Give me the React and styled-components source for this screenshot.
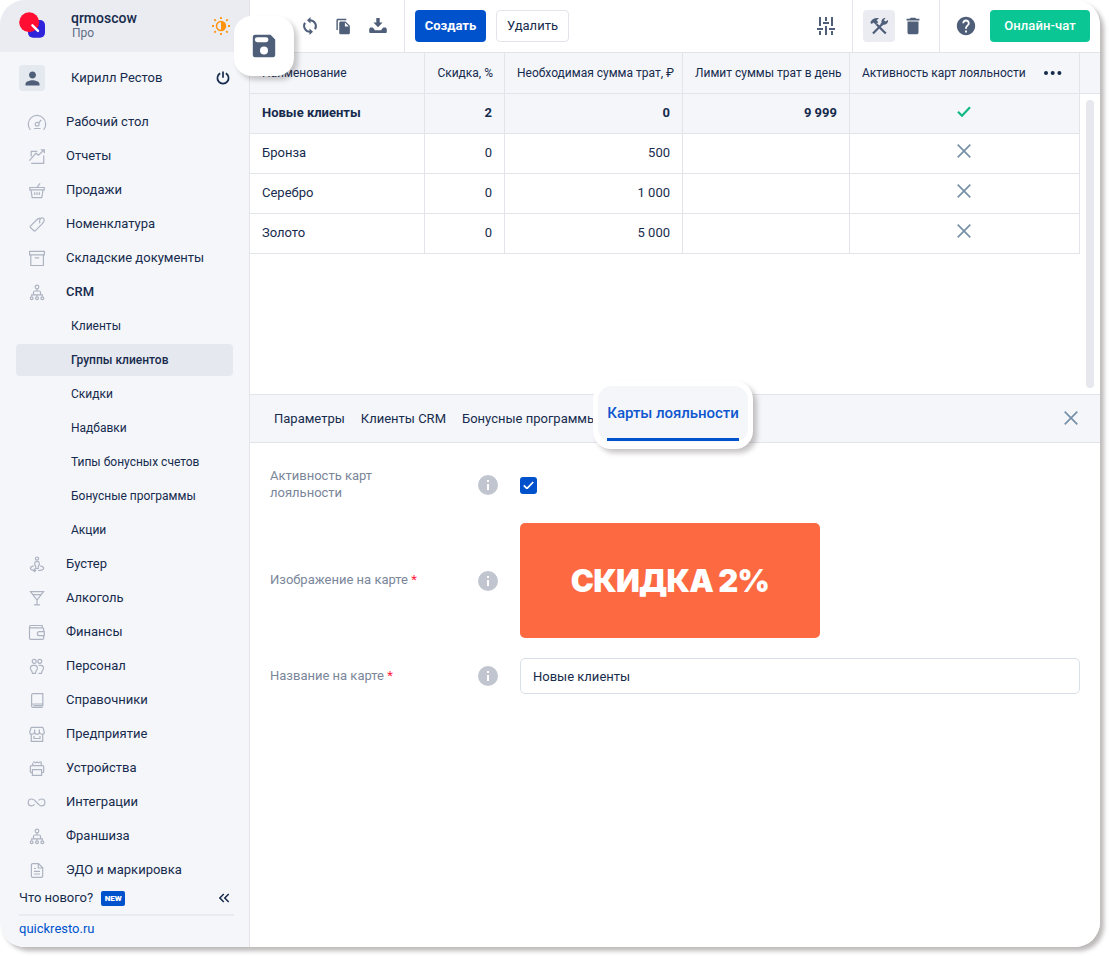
import React from "react";
import styled, { createGlobalStyle } from "styled-components";
import {
  MdDelete,
  MdFileCopy,
  MdHelp,
  MdKeyboardDoubleArrowLeft,
  MdPerson,
} from "react-icons/md";

const NAV = [
  { icon: "gauge", label: "Рабочий стол" },
  { icon: "report", label: "Отчеты" },
  { icon: "basket", label: "Продажи" },
  { icon: "tag", label: "Номенклатура" },
  { icon: "archive", label: "Складские документы" },
  {
    icon: "tree",
    label: "CRM",
    open: true,
    children: [
      "Клиенты",
      "Группы клиентов",
      "Скидки",
      "Надбавки",
      "Типы бонусных счетов",
      "Бонусные программы",
      "Акции",
    ],
  },
  { icon: "booster", label: "Бустер" },
  { icon: "glass", label: "Алкоголь" },
  { icon: "wallet", label: "Финансы" },
  { icon: "people", label: "Персонал" },
  { icon: "book", label: "Справочники" },
  { icon: "store", label: "Предприятие" },
  { icon: "printer", label: "Устройства" },
  { icon: "infinity", label: "Интеграции" },
  { icon: "tree", label: "Франшиза" },
  { icon: "doc", label: "ЭДО и маркировка" },
];

const ROWS = [
  { name: "Новые клиенты", discount: "2", need: "0", limit: "9 999", active: true },
  { name: "Бронза", discount: "0", need: "500", limit: "", active: false },
  { name: "Серебро", discount: "0", need: "1 000", limit: "", active: false },
  { name: "Золото", discount: "0", need: "5 000", limit: "", active: false },
];

const NAV_ICONS = {
  gauge: (
    <>
      <path d="M3.4 16.8A8.7 8.7 0 1 1 16.6 16.8M7 15.5h6.5M11.6 9.8l2.6-2.8" />
      <circle cx="10.2" cy="11.2" r="1.9" />
    </>
  ),
  report: (
    <path d="M2.4 13.7 9 6.2l2.4 2L17 3M13.8 2.8h3.5v3.5M4.2 9.5V4.3h6M16.7 8.500v7.800H4.200" />
  ),
  basket: (
    <path d="M13 2.3 10 6.5M2.8 6.5h14.4v2.3H2.8zM4 9l1.2 7.6h9.6L16 9M7.7 11.3v2.6M10 11.3v2.6M12.3 11.3v2.6" />
  ),
  tag: (
    <path d="M3.400 11.200 10.600 4c.5-.5 1-.6 1.600-.6h1.300M16 7.200c0 .6-.2 1-.6 1.400l-7 7.100c-.5.5-1 .5-1.500 0l-3.400-3.200c-.5-.4-.5-.9 0-1.300M12.800 8.400c-.7-3 .3-5.500 2.400-5.600 2.500-.1 2.500 3.600.5 5.200" />
  ),
  archive: <path d="M2.600 2.400h14.800v3.400H2.600zM3.800 6v10.500h12.600V6M7.800 8.800h4.400" />,
  tree: (
    <>
      <circle cx="10" cy="4" r="1.8" />
      <path d="M10 6v2M6.500 11.500V9.400c0-.8.5-1.400 1.400-1.400h4.200c.9 0 1.400.6 1.400 1.400v2.100M4.700 13.600v-1.800h10.600v1.800M10 11.800v1.800" />
      <circle cx="4.700" cy="15.300" r="1.400" />
      <circle cx="10" cy="15.300" r="1.400" />
      <circle cx="15.300" cy="15.300" r="1.400" />
    </>
  ),
  booster: (
    <>
      <circle cx="10" cy="3.600" r="1.600" />
      <path d="M8.700 13.500V11L7.800 10V8c0-.8.5-1.300 1.300-1.300h1.800c.8 0 1.300.5 1.300 1.300v2l-.9 1v2.500zM6.600 10.800c-4.800 1-4.200 4.600 2 4.700M6.800 13.800l1.900 1.700-1.900 1.400M11 15.500c6.800.1 7.400-3.800 2.200-4.700" />
    </>
  ),
  glass: <path d="M3.500 2.700h13L10 11zM5.800 5.700h8.400M10 11v4.700M7 15.800h6" />,
  wallet: (
    <path d="M16.600 8.500V6c0-.8-.4-1.200-1.200-1.200H3.700c-.8 0-1.200-.4-1.200-1.100s.4-1.200 1.200-1.200h11.500v2.200M2.500 3.800v11.400c0 .8.4 1.200 1.200 1.200h11.700c.8 0 1.200-.4 1.200-1.200v-2.400M17.300 8.700h-5c-2.600 0-2.600 4 0 4h5z" />
  ),
  people: (
    <>
      <circle cx="7.200" cy="4.300" r="2" />
      <circle cx="12.800" cy="4.300" r="2" />
      <path d="M5.500 16.400c-.3-1.500-.4-2-1-2.700-2-1.800-1.300-5.400 1.600-5.400h1.600c2.900 0 3.600 3.600 1.600 5.400-.6.700-.7 1.200-.9 2.700zM11.600 8.300h2.200c2.900 0 3.600 3.600 1.600 5.400-.6.700-.7 1.200-.9 2.700h-3" />
    </>
  ),
  book: (
    <path d="M15.800 13V2.700H6c-.9 0-1.400.5-1.400 1.400v10.900c0 .9.5 1.400 1.400 1.400h9.800M15.800 13H6c-1.100 0-1.400.7-1.400 1.500M6.500 14.700h9.300V13" />
  ),
  store: (
    <path d="M4.200 2.400h11.600L17.300 7c0 3-4.400 3-4.900 0 0 3-4.800 3-4.800 0 -.5 3-4.900 3-4.900 0zM7.600 7V4.500M12.400 7V4.500M4.300 9.600v6.800h11.400V9.600M7 11v2.500h6V11" />
  ),
  printer: (
    <path d="M5.800 6.500V4M5.800 3h1.400l1.400.8 1.400-.8 1.400.8 1.400-.8h1.400v3.500M5.300 13.700h-.8c-.8 0-1.200-.4-1.200-1.200V8c0-.8.4-1.300 1.200-1.300h11c.8 0 1.200.5 1.200 1.300v4.500c0 .8-.4 1.200-1.200 1.200h-.8M5.400 10.700h9.200v5.600H5.400z" />
  ),
  infinity: (
    <path d="M11.600 7.400c1-1 2-1.400 2.900-1.400a3.400 3.400 0 0 1 0 6.800c-4 0-5.400-6.800-9.900-6.800a3.400 3.400 0 0 0 0 6.800c1.200 0 2.100-.5 3-1.400" />
  ),
  doc: (
    <path d="M11.500 2.600H5.700c-.8 0-1.300.5-1.300 1.300v11.200c0 .8.5 1.300 1.300 1.300h8.700c.8 0 1.300-.5 1.300-1.300V6.800zM11.300 2.800v4.200h4.200M7 7.500h2M7 10.300h6M7 13h6" />
  ),
};

function Logo() {
  return (
    <svg width="28" height="28" viewBox="0 0 28 28">
      <rect x="9" y="8" width="17" height="17.800" rx="5" fill="#3023dc" />
      <circle cx="10.200" cy="10.200" r="10" fill="#ff0d33" />
      <path d="m13.400 13.300 5.600 5.600" stroke="#fff" strokeWidth="2.400" strokeLinecap="round" />
    </svg>
  );
}

function SunIcon() {
  return (
    <svg width="18" height="18" viewBox="0 0 18 18" fill="none" stroke="#ff930f">
      <circle cx="9" cy="9" r="4.500" strokeWidth="1.500" />
      <path d="M9 4.500a4.500 4.500 0 0 1 0 9z" fill="#ff930f" stroke="none" />
      <path
        strokeWidth="1.800"
        d="M9 0v2M9 16v2M0 9h2M16 9h2M2.300 2.300l1.500 1.500M14.200 14.200l1.500 1.500M2.300 15.700l1.500-1.500M14.200 3.800l1.500-1.500"
      />
    </svg>
  );
}

function PowerIcon() {
  return (
    <svg width="14" height="14" viewBox="0 0 14 14" fill="none" stroke="#172b4d" strokeWidth="1.700">
      <path d="M4.200 2.200a5.600 5.600 0 1 0 5.600 0M7 .5v6.300" />
    </svg>
  );
}

function SaveIcon() {
  return (
    <svg width="24" height="24" viewBox="0 0 24 24">
      <path
        fill="#505f79"
        fillRule="evenodd"
        d="M3 .8h15.500l4.700 4.700V21a2.200 2.200 0 0 1-2.200 2.200H3A2.200 2.200 0 0 1 .8 21V3A2.200 2.200 0 0 1 3 .8zM5.300 3.300a2.400 2.400 0 0 0 0 4.900h8.700a2.400 2.400 0 0 0 0-4.900zM12 12.600a4 4 0 1 0 0 8 4 4 0 0 0 0-8z"
      />
    </svg>
  );
}

function SyncIcon() {
  return (
    <svg width="16" height="18" viewBox="0 0 16 18">
      <path
        d="M7.500 3.200H8a5.900 5.900 0 0 1 5 9M8.500 14.800H8a5.900 5.900 0 0 1-5-9"
        fill="none"
        stroke="#505f79"
        strokeWidth="2"
      />
      <path d="M8.500 0v6.400L5 3.200zM7.500 18v-6.400l3.500 3.200z" fill="#505f79" />
    </svg>
  );
}

function DownloadIcon() {
  return (
    <svg width="18" height="18" viewBox="0 0 18 18" fill="#505f79">
      <path d="M7.300 1h3.400v4.500h2.900L9 10.200 4.400 5.500h2.900z" />
      <path d="M1.200 10.500h2.600L6 13.200h6l2.200-2.700h2.600l1 1.500v2.700c0 .8-.5 1.300-1.300 1.300h-15c-.8 0-1.300-.5-1.300-1.300V12z" />
    </svg>
  );
}

function SlidersIcon() {
  return (
    <svg width="18" height="18" viewBox="0 0 18 18" stroke="#505f79" strokeWidth="2" fill="none">
      <path d="M3 0v9M3 14v4M9 0v4M9 9v9M15 0v9M15 14v4M0 12h6M6 6h6M12 12h6" />
    </svg>
  );
}

function ToolsIcon() {
  return (
    <svg width="20" height="20" viewBox="0 0 20 20">
      <path
        d="M7.500 8.200 16.800 17.600M13.300 8 4 17.600"
        stroke="#505f79"
        strokeWidth="2.200"
      />
      <path
        fill="#505f79"
        d="M1.300 6.500C2.500 3 5.500 1.400 10.100 2L7.700 4.200l1.500 2-2.600 2.600-2-2.200-1.900 1.300zM12.500 6.700c-.4-2.700 1.300-4.800 4-5L15 4.300l1.300 1.300 2.800-1.500c.3 2.900-1.700 5-4.500 4.600l-1.300.8L11.500 7.700z"
      />
    </svg>
  );
}

function Check({ width, color }) {
  return (
    <svg width={width} viewBox="0 0 14 11" fill="none">
      <path d="m1 5.700 4 4 8-8.400" stroke={color} strokeWidth="2.200" />
    </svg>
  );
}

function Cross({ size }) {
  return (
    <svg width={size} height={size} viewBox="0 0 14 14" fill="none">
      <path d="m.7 .7 12.600 12.600M13.300.7.7 13.300" stroke="#7590a8" strokeWidth="1.700" />
    </svg>
  );
}

function Info() {
  return (
    <InfoIcon viewBox="0 0 20 20">
      <circle cx="10" cy="10" r="10" fill="#c1c5d0" />
      <path d="M9 5h2v2H9zM9 9h2v6H9z" fill="#fff" />
    </InfoIcon>
  );
}

function Sidebar() {
  return (
    <Side>
      <Account>
        <Logo />
        <AccountText>
          <b>qrmoscow</b>
          <span>Про</span>
        </AccountText>
        <SunIcon />
      </Account>
      <User>
        <Avatar>
          <MdPerson size={21} />
        </Avatar>
        <UserName>Кирилл Рестов</UserName>
        <PowerIcon />
      </User>
      <Nav>
        {NAV.map((item) => (
          <React.Fragment key={item.label}>
            <NavItem $open={item.open}>
              <NavIcon viewBox="0 0 20 20">{NAV_ICONS[item.icon]}</NavIcon>
              {item.label}
            </NavItem>
            {item.children?.map((child) => (
              <SubItem key={child} $active={child === "Группы клиентов"}>
                {child}
              </SubItem>
            ))}
          </React.Fragment>
        ))}
      </Nav>
      <News>
        <span>Что нового?</span>
        <Badge>NEW</Badge>
        <MdKeyboardDoubleArrowLeft size={18} />
      </News>
      <SiteLink>quickresto.ru</SiteLink>
    </Side>
  );
}

function Toolbar() {
  return (
    <Bar>
      <FileTools>
        <SyncIcon />
        <MdFileCopy size={17} />
        <DownloadIcon />
      </FileTools>
      <Actions>
        <Button $kind="primary">Создать</Button>
        <Button>Удалить</Button>
        <SlidersIcon />
      </Actions>
      <ViewTools>
        <ToolButton>
          <ToolsIcon />
        </ToolButton>
        <MdDelete size={22} />
      </ViewTools>
      <Support>
        <MdHelp size={22} />
        <Button $kind="chat">Онлайн-чат</Button>
      </Support>
    </Bar>
  );
}

function Groups() {
  return (
    <Table>
      <HeadRow>
        <Cell>Наименование</Cell>
        <Cell $right>Скидка, %</Cell>
        <Cell>Необходимая сумма трат, ₽</Cell>
        <Cell>Лимит суммы трат в день</Cell>
        <Cell>
          Активность карт лояльности
          <Dots viewBox="0 0 18 4">
            <circle cx="2" cy="2" r="2" />
            <circle cx="8.700" cy="2" r="2" />
            <circle cx="15.400" cy="2" r="2" />
          </Dots>
        </Cell>
      </HeadRow>
      <TableBody>
        <div>
          {ROWS.map((row) => (
            <Row key={row.name} $active={row.active}>
              <Cell>{row.name}</Cell>
              <Cell $right>{row.discount}</Cell>
              <Cell $right>{row.need}</Cell>
              <Cell $right>{row.limit}</Cell>
              <Cell $center>
                {row.active ? <Check width={14} color="#10b981" /> : <Cross size={14} />}
              </Cell>
            </Row>
          ))}
        </div>
        <Scrollbar />
      </TableBody>
    </Table>
  );
}

function Details() {
  return (
    <Panel>
      <Tabs>
        <Tab>Параметры</Tab>
        <Tab>Клиенты CRM</Tab>
        <Tab>Бонусные программы</Tab>
        <Cross size={14} />
        <ActiveTab>
          <TabPlate>
            <span>Карты лояльности</span>
          </TabPlate>
        </ActiveTab>
      </Tabs>
      <Form>
        <Label>Активность карт лояльности</Label>
        <Info />
        <Checkbox>
          <Check width={11} color="#fff" />
        </Checkbox>
        <Label>
          Изображение на карте <i>*</i>
        </Label>
        <Info />
        <CardImage>СКИДКА 2%</CardImage>
        <Label>
          Название на карте <i>*</i>
        </Label>
        <Info />
        <Field>Новые клиенты</Field>
      </Form>
    </Panel>
  );
}

function App() {
  return (
    <>
      <GlobalStyle />
      <Window>
        <Clip>
          <Sidebar />
          <Main>
            <Toolbar />
            <Groups />
            <Details />
          </Main>
        </Clip>
        <SaveButton>
          <SaveIcon />
        </SaveButton>
      </Window>
    </>
  );
}

export default App;

const GlobalStyle = createGlobalStyle`
  * {
    box-sizing: border-box;
  }

  body {
    min-height: 956px;
    margin: 0;
    background: #fff;
    color: #172b4d;
    font-family: Roboto, "Liberation Sans", sans-serif;
    font-size: 13px;
  }

  svg {
    display: block;
    flex: none;
  }
`;

const Window = styled.div`
  position: relative;
  width: 1100px;
  height: 947px;
  border-radius: 25px;
  box-shadow: 4px 4px 4px rgba(50, 40, 40, 0.32);
`;

const Clip = styled.div`
  display: flex;
  height: 100%;
  border-radius: 25px;
  overflow: hidden;
  background: #fff;
`;

const Side = styled.aside`
  width: 250px;
  flex: none;
  background: #f4f6fa;
  border-right: 1px solid #e2e4e9;
`;

const Account = styled.div`
  display: flex;
  align-items: center;
  height: 52px;
  padding: 0 19px;
  background: #ebecf1;
`;

const AccountText = styled.div`
  display: flex;
  flex-direction: column;
  flex: 1;
  margin: 0 0 1px 24px;

  b {
    font-size: 14px;
    font-weight: 500;
    line-height: 16px;
  }

  span {
    color: #5e6c84;
    font-size: 12px;
    line-height: 15px;
    padding-left: 1px;
  }
`;

const User = styled.div`
  display: flex;
  align-items: center;
  height: 53px;
  padding: 0 19px 1px;
`;

const Avatar = styled.div`
  display: flex;
  align-items: center;
  justify-content: center;
  width: 26px;
  height: 26px;
  border-radius: 4px;
  background: #e4e8ef;
  color: #505f79;
`;

const UserName = styled.div`
  flex: 1;
  margin: 0 0 2px 26px;
`;

const Nav = styled.nav`
  display: flex;
  flex-direction: column;
`;

const NavItem = styled.div`
  display: flex;
  align-items: center;
  height: 34px;
  padding: 0 0 2px 27px;
  font-weight: ${({ $open }) => ($open ? 500 : 400)};
`;

const NavIcon = styled.svg`
  width: 20px;
  height: 20px;
  margin: 4px 19px 0 0;
  fill: none;
  stroke: #adb3c0;
  stroke-width: 1.2;
`;

const SubItem = styled.div`
  display: flex;
  align-items: center;
  height: 32px;
  margin: 1px 16px;
  padding-left: 55px;
  border-radius: 4px;
  font-size: 12px;
  font-weight: ${({ $active }) => ($active ? 500 : 400)};
  background: ${({ $active }) => ($active ? "#e6e8f0" : "none")};
`;

const News = styled.div`
  display: flex;
  align-items: center;
  height: 29px;
  margin: 0 15px 0 19px;
  padding: 0 1px 5px 0;
  border-bottom: 2px solid #e9ebf2;

  span:first-child {
    padding-bottom: 1px;
  }

  svg {
    margin-left: auto;
  }
`;

const Badge = styled.span`
  display: flex;
  align-items: center;
  justify-content: center;
  width: 24px;
  height: 15px;
  margin-left: 8px;
  border-radius: 2px;
  background: #0052cc;
  color: #fff;
  font-size: 8px;
  font-weight: 900;
`;

const SiteLink = styled.div`
  padding: 5px 19px;
  color: #0052cc;
`;

const Main = styled.main`
  display: flex;
  flex-direction: column;
  flex: 1;
  min-width: 0;
`;

const Bar = styled.div`
  display: flex;
  height: 53px;
  border-bottom: 1px solid #e2e4e9;
  color: #505f79;
`;

const BarGroup = styled.div`
  display: flex;
  align-items: center;
  border-right: 1px solid #e2e4e9;
`;

const FileTools = styled(BarGroup)`
  width: 155px;
  gap: 17px;
  padding-left: 52px;
`;

const Actions = styled(BarGroup)`
  flex: 1;
  gap: 10px;
  padding: 0 17px 0 10px;

  svg {
    margin-left: auto;
  }
`;

const ViewTools = styled(BarGroup)`
  width: 87px;
  gap: 7px;
  padding-left: 10px;
`;

const Support = styled(BarGroup)`
  width: 160px;
  justify-content: space-between;
  padding: 0 10px 0 15px;
  border: 0;
`;

const BUTTONS = {
  primary: { background: "#0052cc", color: "#fff", width: "71px", weight: 700 },
  chat: { background: "#0ac694", color: "#fff", width: "100px", weight: 500 },
  plain: { background: "#fff", color: "#172b4d", width: "73px", weight: 400 },
};

const Button = styled.button`
  width: ${({ $kind = "plain" }) => BUTTONS[$kind].width};
  height: 32px;
  padding: 0 0 2px;
  border: ${({ $kind }) => ($kind ? "0" : "1px solid #e2e4e9")};
  border-radius: 4px;
  background: ${({ $kind = "plain" }) => BUTTONS[$kind].background};
  color: ${({ $kind = "plain" }) => BUTTONS[$kind].color};
  font: ${({ $kind = "plain" }) => BUTTONS[$kind].weight} 13px Roboto, sans-serif;
  letter-spacing: ${({ $kind }) => ($kind === "chat" ? "0.1px" : "0")};
`;

const ToolButton = styled.div`
  display: flex;
  align-items: center;
  justify-content: center;
  width: 32px;
  height: 32px;
  border-radius: 4px;
  background: #ebecf1;
`;

const Table = styled.div`
  display: flex;
  flex-direction: column;
  height: 341px;
`;

const Row = styled.div`
  display: grid;
  grid-template-columns: 175px 80px 178px 167px 230px;
  height: 40px;
  font-weight: ${({ $active }) => ($active ? 700 : 400)};
  background: ${({ $active }) => ($active ? "#f4f6fa" : "#fff")};
`;

const Cell = styled.div`
  display: flex;
  align-items: center;
  justify-content: ${({ $right, $center }) =>
    $right ? "flex-end" : $center ? "center" : "flex-start"};
  padding: ${({ $center }) => ($center ? "0 13px 5px 12px" : "0 12px 2px")};
  border-right: 1px solid #e2e4e9;
  border-bottom: 1px solid #e2e4e9;
  white-space: nowrap;
`;

const HeadRow = styled(Row)`
  height: 41px;
  border-bottom: 1px solid #e2e4e9;
  background: #f4f6fa;
  font-size: 12px;

  ${Cell} {
    border-bottom: 0;
    padding-right: 11px;
    padding-bottom: 1px;
  }
`;

const Dots = styled.svg`
  width: 18px;
  height: 4px;
  margin: 0 6px 0 auto;
  fill: #172b4d;
`;

const TableBody = styled.div`
  display: flex;
  flex: 1;
`;

const Scrollbar = styled.div`
  width: 8px;
  height: 288px;
  margin: 6px 0 0 6px;
  border-radius: 4px;
  background: #e6e8ed;
`;

const Panel = styled.section`
  flex: 1;
  border-top: 1px solid #e2e4e9;
`;

const Tabs = styled.div`
  position: relative;
  display: flex;
  align-items: center;
  gap: 16px;
  height: 48px;
  padding: 0 22px 0 24px;
  border-bottom: 1px solid #e2e4e9;
  background: #f4f6fa;

  > svg {
    margin: 0 0 1px auto;
  }
`;

const Tab = styled.div`
  white-space: nowrap;
`;

const ActiveTab = styled.div`
  position: absolute;
  top: -14px;
  left: 343px;
  width: 160px;
  height: 68px;
  padding: 5px;
  border-radius: 18px;
  background: #fff;
  box-shadow: 4px 4px 5px rgba(60, 50, 50, 0.28);
`;

const TabPlate = styled.div`
  display: flex;
  justify-content: center;
  height: 56px;
  border-radius: 14px;
  background: #f4f6fa;

  span {
    height: 55px;
    padding-top: 18px;
    border-bottom: 3px solid #0052cc;
    color: #0f56cf;
    font-size: 15px;
    font-weight: 500;
    letter-spacing: -0.05px;
    white-space: nowrap;
  }
`;

const Form = styled.div`
  display: grid;
  grid-template-columns: 208px 42px 560px;
  grid-template-rows: 76px 115px;
  grid-auto-rows: 76px;
  align-items: center;
  padding: 4px 0 0 20px;
`;

const Label = styled.div`
  max-width: 150px;
  padding-bottom: 2px;
  color: #7a869a;
  line-height: 17px;

  i {
    color: #ff1a3a;
    font-style: normal;
  }
`;

const InfoIcon = styled.svg`
  width: 20px;
  height: 20px;
`;

const Checkbox = styled.div`
  display: flex;
  align-items: center;
  justify-content: center;
  width: 17px;
  height: 17px;
  border-radius: 3px;
  background: #0052cc;
`;

const CardImage = styled.div`
  display: flex;
  align-items: center;
  justify-content: center;
  width: 300px;
  height: 115px;
  border-radius: 5px;
  background: #fd6a42;
  color: #fff;
  font-family: Inter, sans-serif;
  font-size: 31px;
  font-weight: 900;
  letter-spacing: -0.8px;
`;

const Field = styled.div`
  display: flex;
  align-items: center;
  height: 36px;
  padding-left: 12px;
  border: 1px solid #d9dfe8;
  border-radius: 5px;
`;

const SaveButton = styled.div`
  position: absolute;
  top: 16px;
  left: 234px;
  display: flex;
  align-items: center;
  justify-content: center;
  width: 60px;
  height: 60px;
  border-radius: 18px;
  background: #fff;
  box-shadow: 4px 4px 5px rgba(60, 50, 50, 0.25);
`;
